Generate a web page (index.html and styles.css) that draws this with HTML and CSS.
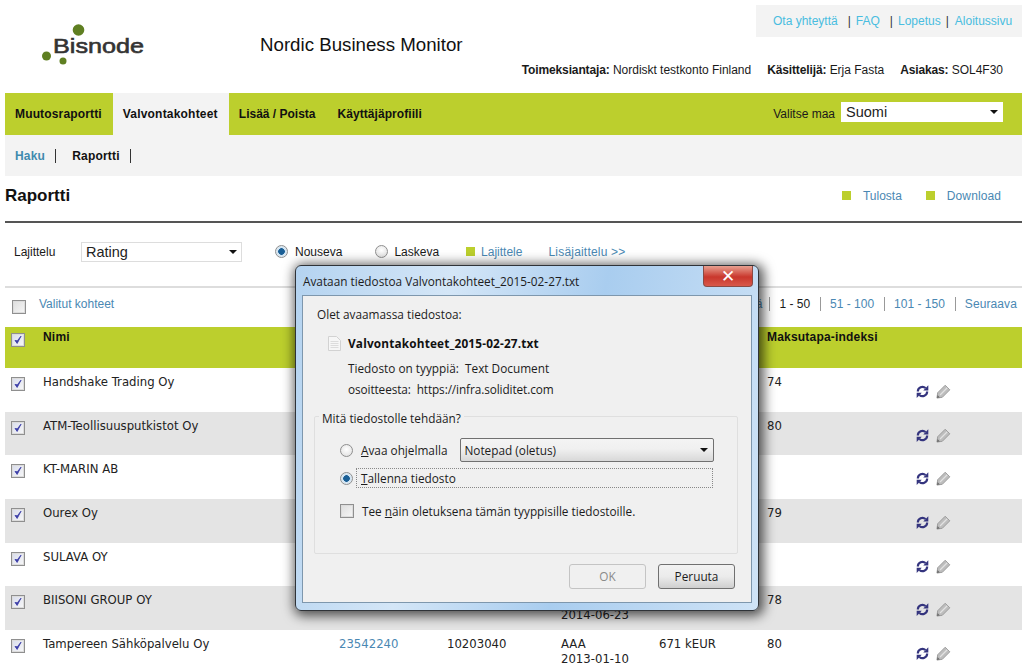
FILE: index.html
```html
<!DOCTYPE html>
<html lang="fi">
<head>
<meta charset="utf-8">
<title>Nordic Business Monitor</title>
<link rel="stylesheet" href="styles.css">
</head>
<body>
<svg class="defs" width="0" height="0">
  <symbol id="check" viewBox="0 0 14 14"><path d="M3.500 7.500 L6 11 L10.500 2.500 L6.200 8 Z" fill="#3d3fa8" stroke="#3d3fa8" stroke-width="1"/></symbol>
  <symbol id="sync" viewBox="0 0 16 16"><path d="M3 8A5 5 0 0 1 11.300 4.300" fill="none" stroke="#34347e" stroke-width="2.300"/><path d="M8.800 6.800H14.200V1.200Z" fill="#34347e"/><path d="M13 8A5 5 0 0 1 4.700 11.700" fill="none" stroke="#34347e" stroke-width="2.300"/><path d="M7.200 9.200H1.800V14.800Z" fill="#34347e"/></symbol>
  <symbol id="pencil" viewBox="0 0 16 16"><path d="M1 15 L1.800 9.300 L9.800 1.300 L14.700 6.200 L6.700 14.200 Z" fill="#bdbdbd" stroke="#999" stroke-width="1"/><path d="M4.300 11.700 L12 4" stroke="#e2e2e2" stroke-width="1.300"/><path d="M1 15 L1.600 11.800 L4.200 14.400 Z" fill="#6e6e6e"/></symbol>
</svg>
<div class="page">
  <header class="head">
    <svg class="logo" width="110" height="50" viewBox="0 0 110 50" role="img" aria-label="Bisnode">
      <circle cx="38.500" cy="11" r="5.800" fill="#5f7f22"/>
      <circle cx="6.500" cy="37" r="4.500" fill="#5f7f22"/>
      <circle cx="23" cy="42" r="3.500" fill="#5f7f22"/>
      <text class="logo-text" x="13" y="34" textLength="91" lengthAdjust="spacingAndGlyphs">Bisnode</text>
    </svg>
    <h1 class="app-title">Nordic Business Monitor</h1>
    <div class="head-right">
      <div class="top-links">
        <a>Ota yhteyttä</a><span class="tsep s1">|</span><a>FAQ</a><span class="tsep s2">|</span><a>Lopetus</a><span class="tsep s3">|</span><a>Aloitussivu</a>
      </div>
      <div class="info">
        <span><b>Toimeksiantaja:</b> Nordiskt testkonto Finland</span>
        <span><b>Käsittelijä:</b> Erja Fasta</span>
        <span><b>Asiakas:</b> SOL4F30</span>
      </div>
    </div>
  </header>

  <nav class="nav">
    <a class="tab">Muutosraportti</a>
    <a class="tab active">Valvontakohteet</a>
    <a class="tab">Lisää / Poista</a>
    <a class="tab">Käyttäjäprofiili</a>
    <div class="country">
      <span>Valitse maa</span>
      <div class="select country-select">Suomi<i class="caret"></i></div>
    </div>
  </nav>

  <div class="subnav">
    <a class="haku">Haku</a><span class="subsep"></span><a class="raportti">Raportti</a><span class="subsep"></span>
  </div>

  <div class="title-row">
    <h2>Raportti</h2>
    <div class="actions">
      <i class="sq"></i><a>Tulosta</a>
      <i class="sq"></i><a>Download</a>
    </div>
  </div>

  <div class="sort-row">
    <span class="sort-label">Lajittelu</span>
    <div class="select sort-select">Rating<i class="caret"></i></div>
    <i class="radio on nouseva"></i><span>Nouseva</span>
    <i class="radio laskeva"></i><span>Laskeva</span>
    <i class="sq lajsq"></i><a>Lajittele</a>
    <a class="lisa">Lisäjaittelu &gt;&gt;</a>
  </div>

  <div class="pager-row">
    <span class="cb"></span>
    <a class="valitut">Valitut kohteet</a>
    <div class="pager">
      <a>Edellisiä</a><b class="pcur">1 - 50</b><a>51 - 100</a><a>101 - 150</a><a>Seuraava</a>
    </div>
  </div>

  <table class="grid">
    <colgroup><col class="c1"><col class="c2"><col class="c3"><col class="c4"><col class="c5"><col class="c6"><col class="c7"><col class="c8"></colgroup>
    <thead>
      <tr><th><span class="cb"><svg><use href="#check"/></svg></span></th><th>Nimi</th><th></th><th></th><th></th><th></th><th>Maksutapa-indeksi</th><th></th></tr>
    </thead>
    <tbody>
      <tr><td><span class="cb"><svg><use href="#check"/></svg></span></td><td>Handshake Trading Oy</td><td></td><td></td><td></td><td></td><td>74</td><td class="ic"><svg><use href="#sync"/></svg><svg><use href="#pencil"/></svg></td></tr>
      <tr><td><span class="cb"><svg><use href="#check"/></svg></span></td><td>ATM-Teollisuusputkistot Oy</td><td></td><td></td><td></td><td></td><td>80</td><td class="ic"><svg><use href="#sync"/></svg><svg><use href="#pencil"/></svg></td></tr>
      <tr><td><span class="cb"><svg><use href="#check"/></svg></span></td><td>KT-MARIN AB</td><td></td><td></td><td></td><td></td><td></td><td class="ic"><svg><use href="#sync"/></svg><svg><use href="#pencil"/></svg></td></tr>
      <tr><td><span class="cb"><svg><use href="#check"/></svg></span></td><td>Ourex Oy</td><td></td><td></td><td></td><td></td><td>79</td><td class="ic"><svg><use href="#sync"/></svg><svg><use href="#pencil"/></svg></td></tr>
      <tr><td><span class="cb"><svg><use href="#check"/></svg></span></td><td>SULAVA OY</td><td></td><td></td><td></td><td></td><td></td><td class="ic"><svg><use href="#sync"/></svg><svg><use href="#pencil"/></svg></td></tr>
      <tr><td><span class="cb"><svg><use href="#check"/></svg></span></td><td>BIISONI GROUP OY</td><td></td><td></td><td>AAA<br>2014-06-23</td><td></td><td>78</td><td class="ic"><svg><use href="#sync"/></svg><svg><use href="#pencil"/></svg></td></tr>
      <tr><td><span class="cb"><svg><use href="#check"/></svg></span></td><td>Tampereen Sähköpalvelu Oy</td><td><a>23542240</a></td><td>10203040</td><td>AAA<br>2013-01-10</td><td>671 kEUR</td><td>80</td><td class="ic"><svg><use href="#sync"/></svg><svg><use href="#pencil"/></svg></td></tr>
    </tbody>
  </table>
</div>

<div class="dialog">
  <div class="dlg-title">Avataan tiedostoa Valvontakohteet_2015-02-27.txt<span class="close">✕</span></div>
  <div class="dlg-panel">
    <p class="d-open">Olet avaamassa tiedostoa:</p>
    <div class="d-file">
      <svg class="fileicon" width="13" height="15" viewBox="0 0 13 15"><path d="M0.500 0.500H8.500L12.500 4.500V14.500H0.500Z" fill="#f6f6f6" stroke="#d2d2d2"/><path d="M2.500 5.500H10.500M2.500 7.500H10.500M2.500 9.500H10.500M2.500 11.500H10.500" stroke="#dcdcdc"/></svg>
      <b>Valvontakohteet_2015-02-27.txt</b>
    </div>
    <p class="d-meta">Tiedosto on tyyppiä:&nbsp; Text Document</p>
    <p class="d-meta second">osoitteesta:&nbsp; https://infra.soliditet.com</p>
    <fieldset class="group">
      <legend>Mitä tiedostolle tehdään?</legend>
      <div class="opt first">
        <i class="radio"></i><span class="opt-label"><u>A</u>vaa ohjelmalla</span>
        <div class="app-select">Notepad (oletus)<i class="caret"></i></div>
      </div>
      <div class="opt">
        <i class="radio on"></i><span class="focusbox"><u>T</u>allenna tiedosto</span>
      </div>
      <div class="opt third">
        <span class="cb dlgcb"></span><span class="opt-label">Tee <u>n</u>äin oletuksena tämän tyyppisille tiedostoille.</span>
      </div>
    </fieldset>
    <div class="buttons">
      <span class="btn disabled">OK</span>
      <span class="btn">Peruuta</span>
    </div>
  </div>
</div>
</body>
</html>
```
FILE: styles.css
```css
* { box-sizing: border-box; }
html, body { margin: 0; height: 672px; overflow: hidden; background: #fff; }
body { font: 12px "Liberation Sans", Arial, sans-serif; color: #1a1a1a; position: relative; }
.defs { position: absolute; }
a { color: #4a88b3; }
p, h1, h2 { margin: 0; }
.page { padding: 0 2px 0 5px; width: 1024px; }

.head { display: flex; height: 93px; }
.logo { margin: 19px 0 0 35px; flex: none; }
.logo-text { font: 400 21px "Liberation Sans", sans-serif; fill: #333; stroke: #333; stroke-width: .6px; }
.app-title { font: 400 18.700px "Liberation Sans", sans-serif; color: #111; margin: 34px 0 0 110px; white-space: nowrap; }
.head-right { margin-left: auto; display: flex; flex-direction: column; align-items: flex-end; }
.top-links { margin-top: 5px; width: 266px; height: 32px; background: #f3f3f3; display: flex; align-items: center; padding-left: 17px; white-space: nowrap; }
.top-links a { color: #49bde0; }
.tsep { color: #333; }
.s1 { margin: 0 5px 0 10px; }
.s2 { margin: 0 5px 0 10px; }
.s3 { margin: 0 6px 0 5px; }
.info { margin-top: 26px; padding-right: 19px; display: flex; gap: 16px; white-space: nowrap; line-height: 14px; letter-spacing: -.02px; }
.info b { letter-spacing: -.13px; }

.nav { display: flex; height: 42px; background: #bccf2d; align-items: stretch; }
.tab { color: #111; font-weight: 700; padding: 0 10px; display: flex; align-items: center; white-space: nowrap; }
.tab:nth-child(1) { letter-spacing: .15px; padding-right: 11px; }
.tab:nth-child(3) { margin-right: 2px; }
.tab:nth-child(4) { letter-spacing: .06px; }
.tab.active { background: #f3f3f3; letter-spacing: .2px; padding-right: 11px; }
.country { margin-left: auto; padding-right: 19px; display: flex; align-items: center; gap: 6px; }
.select { background: #fff; display: flex; align-items: center; justify-content: space-between; font-family: "Liberation Sans", sans-serif; font-size: 14.500px; color: #222; padding: 0 5px; }
.country-select { width: 162px; height: 20px; margin-bottom: 4px; }
.caret { width: 0; height: 0; border: 4px solid transparent; border-top: 4px solid #111; border-bottom: 0; display: block; }

.subnav { height: 41px; background: #f3f3f3; display: flex; align-items: center; padding-left: 10px; font-weight: 700; }
.haku { color: #3f8aae; letter-spacing: .2px; }
.raportti { color: #111; letter-spacing: .2px; }
.subsep { width: 1px; height: 14px; background: #333; margin: 0 16px 0 10px; }

.title-row { display: flex; align-items: center; justify-content: space-between; height: 47px; border-bottom: 2px solid #555; padding-bottom: 6px; }
.title-row h2 { font: 700 17px "Liberation Sans", sans-serif; color: #111; }
.actions { display: flex; align-items: center; padding-right: 21px; }
.actions a { margin: 0 24px 0 12px; }
.actions a:last-child { margin-right: 0; letter-spacing: .1px; }
.sq { width: 9px; height: 9px; background: #bccf2d; display: block; }

.sort-row { height: 65px; border-bottom: 2px solid #ddd; display: flex; align-items: center; padding: 0 0 6px 9px; white-space: nowrap; }
.sort-label { width: 67px; }
.sort-select { width: 161px; height: 20px; border: 1px solid #ddd; padding: 0 4px; }
.radio { display: block; flex: none; width: 13px; height: 13px; border-radius: 50%; border: 1px solid #8f8f8f; background: radial-gradient(circle at 50% 40%, #fff, #dcdcdc); }
.radio.on { background: radial-gradient(circle, #1a5f96 0 3px, #cfe3f2 3.600px, #f2f2f2 100%); }
.nouseva { margin: 0 7px 0 33px; }
.laskeva { margin: 0 6px 0 33px; }
.lajsq { margin: 0 6px 0 27px; }
.lisa { margin-left: 26px; letter-spacing: .2px; }

.pager-row { height: 39px; display: flex; align-items: center; padding: 0 5px 7px 7px; white-space: nowrap; }
.cb { display: block; flex: none; width: 14px; height: 14px; border: 1px solid #8f8f8f; box-shadow: inset 0 0 0 1px #dcdcdc; background: linear-gradient(135deg, #d8dcec, #f8f8f8); }
.cb svg { display: block; width: 12px; height: 12px; }
.pager-row .cb { margin-top: 6px; background: linear-gradient(135deg, #ddd, #f6f6f6); }
.valitut { margin: 0 0 0 13px; }
.pager { margin-left: auto; display: flex; }
.pager a, .pcur { padding: 0 10px 0 9px; border-left: 1px solid #999; font-weight: 400; line-height: 14px; }
.pager a:last-child { padding-right: 0; letter-spacing: .1px; }
.pager a:first-child { border-left: 0; padding-right: 7px; }

.grid { width: 1017px; table-layout: fixed; border-collapse: collapse; }
.c1 { width: 38px; } .c2 { width: 296px; } .c3 { width: 108px; } .c4 { width: 114px; }
.c5 { width: 98px; } .c6 { width: 108px; } .c7 { width: 138px; } .c8 { width: 117px; }
.grid th, .grid td { vertical-align: top; text-align: left; height: 43.700px; font: 11.700px/15px "DejaVu Sans", Verdana, sans-serif; color: #222; padding: 7px 0 0; }
.grid th { background: #bccf2d; font: 700 12px/15px "Liberation Sans", sans-serif; color: #111; height: 41px; letter-spacing: .2px; padding-top: 3px; }
.grid tbody tr:nth-child(even) td { background: #e4e4e4; }
.grid th:first-child { padding: 6px 0 0 6px; }
.grid td:first-child { padding: 9px 0 0 6px; }
.grid td.ic { padding: 16px 0 0 10px; }
.ic svg { width: 15px; height: 15px; display: inline-block; margin-right: 6px; vertical-align: top; }

.dialog { position: absolute; left: 295px; top: 265px; width: 464px; height: 346px; border: 1px solid #2f3338; border-radius: 6px; background: linear-gradient(100deg, #b4d3f0, #d4e6f7 30%, #a9cdef 60%, #cfe3f6); box-shadow: 2px 2px 12px 3px rgba(0,0,0,.65); font: 11.800px "Open Sans", "Noto Sans", sans-serif; color: #1c1c1c; padding: 29px 6px 7px; }
.dlg-title { position: absolute; left: 7px; top: 7px; right: 5px; line-height: 16px; white-space: nowrap; }
.close { position: absolute; right: 0; top: -7px; width: 50px; height: 21px; border-radius: 0 0 4px 4px; background: linear-gradient(#e8a090, #c9372c 55%, #d8584a); color: #fff; text-align: center; font: 700 17px/20px "DejaVu Sans", sans-serif; border: 1px solid #8a4a44; border-top: 0; }
.dlg-panel { height: 100%; background: #f0f0f0; border: 1px solid #7e97ad; padding: 10px 13px 0 11px; }
.d-open { line-height: 16px; margin-left: 3px; }
.d-file { display: flex; align-items: center; height: 16px; margin: 13px 0 0 14px; }
.d-file b { margin-left: 7px; font-weight: 700; color: #111; letter-spacing: .17px; }
.fileicon { flex: none; }
.d-meta { line-height: 16px; margin: 9px 0 0 34px; white-space: nowrap; }
.d-meta.second { margin-top: 5px; letter-spacing: -.1px; }
.group { margin: 9px 0 0; padding: 0 0 0 25px; height: 148px; width: 424px; border: 1px solid #dfdfdf; border-radius: 2px; min-width: 0; }
.group legend { padding: 4px 3px 0; margin-left: -21px; line-height: 16px; }
.opt { display: flex; align-items: center; height: 20px; white-space: nowrap; }
.opt.first { height: 24px; margin-top: 12px; }
.opt + .opt { margin-top: 6px; }
.opt.third { margin-top: 15px; height: 16px; }
.opt-label { margin-left: 8px; }
.app-select { width: 254px; height: 24px; margin-left: 13px; border: 1px solid #707070; border-radius: 2px; background: linear-gradient(#f4f4f4, #f0f0f0 45%, #d8d8d8); display: flex; align-items: center; justify-content: space-between; padding: 0 5px 0 3px; }
.focusbox { margin-left: 3px; width: 357px; height: 20px; border: 1px dotted #888; padding-left: 4px; line-height: 18px; }
.dlgcb { background: linear-gradient(135deg, #ddd, #f6f6f6); }
.buttons { display: flex; justify-content: flex-end; gap: 12px; margin-top: 10px; padding-right: 3px; }
.btn { width: 77px; height: 25px; border: 1px solid #707070; border-radius: 3px; background: linear-gradient(#f2f2f2, #ebebeb 50%, #cfcfcf); text-align: center; line-height: 23px; }
.btn.disabled { background: #f0f0f0; border-color: #c4c4c4; color: #8a8a8a; }
```
